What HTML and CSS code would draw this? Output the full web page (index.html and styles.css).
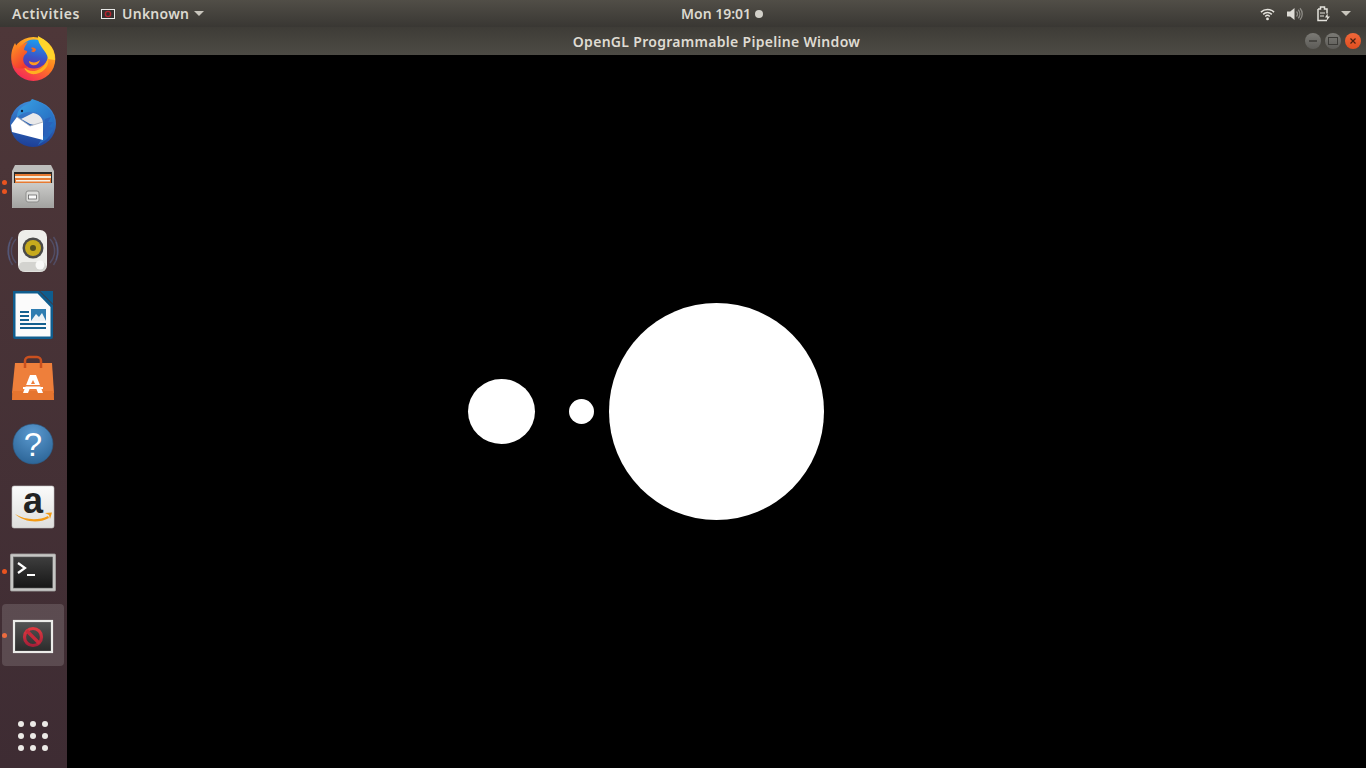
FILE: index.html
```html
<!DOCTYPE html>
<html lang="en">
<head>
<meta charset="utf-8">
<title>OpenGL Programmable Pipeline Window</title>
<link rel="stylesheet" href="styles.css">
</head>
<body>
<header class="topbar">
  <div class="top-left">
    <span class="activities">Activities</span>
    <span class="app-menu">
      <svg class="app-thumb" width="14" height="10" viewBox="0 0 14 10"><rect x=".5" y=".5" width="13" height="9" fill="#33302f" stroke="#e8e8e6"/><circle cx="7" cy="5" r="2.6" fill="none" stroke="#b5242e" stroke-width="1.4"/></svg>
      <span class="app-name">Unknown</span>
      <span class="caret"></span>
    </span>
  </div>
  <div class="clock"><span>Mon 19:01</span><i class="clock-dot"></i></div>
  <div class="tray">
    <svg width="15" height="14" viewBox="0 0 16 14"><g fill="none" stroke="#e4e2dc" stroke-width="1.600"><path d="M1 5a10 10 0 0 1 14 0"/><path d="M3.400 7.400a6.600 6.600 0 0 1 9.200 0"/><path d="M5.600 9.600a3.400 3.400 0 0 1 4.800 0"/></g><circle cx="8" cy="12.200" r="1.500" fill="#e4e2dc"/></svg>
    <svg width="16" height="14" viewBox="0 0 16 14"><path d="M0 4.500h3.200L7.500 1v12L3.200 9.500H0z" fill="#dedcd6"/><g fill="none" stroke="#8d8b85" stroke-width="1.300"><path d="M9.500 4.500a3.500 3.500 0 0 1 0 5"/><path d="M11.200 2.800a6 6 0 0 1 0 8.400"/><path d="M13 1.200a8.600 8.600 0 0 1 0 11.600"/></g></svg>
    <svg width="16" height="16" viewBox="0 0 16 16"><path d="M3 3h2.500V1h4v2H12v4.500M12 14.500H3V3" fill="none" stroke="#e4e2dc" stroke-width="1.500"/><path d="M5 7h5M5 10h4" stroke="#e4e2dc"/><path d="M12.500 7.500 10 11.500h2.200l-.8 3.500L15 10.500h-2.200z" fill="#e4e2dc"/></svg>
    <span class="caret tray-caret"></span>
  </div>
</header>

<div class="desktop">
  <nav class="dock">
    <div class="dock-item">
      <svg class="icon" viewBox="0 0 48 48">
        <defs>
          <linearGradient id="ffa" x1=".85" y1="0" x2=".25" y2="1"><stop offset="0" stop-color="#ffd52b"/><stop offset=".5" stop-color="#ff7d1f"/><stop offset="1" stop-color="#f3235c"/></linearGradient>
          <linearGradient id="ffb" x1=".6" y1="0" x2=".4" y2="1"><stop offset="0" stop-color="#1c9df0"/><stop offset=".6" stop-color="#3a55c8"/><stop offset="1" stop-color="#6a2aa6"/></linearGradient>
          <linearGradient id="ffc" x1="0" y1="0" x2=".6" y2="1"><stop offset="0" stop-color="#ff9c20"/><stop offset="1" stop-color="#f23a30"/></linearGradient>
        </defs>
        <circle cx="24.300" cy="24" r="22" fill="url(#ffa)"/>
        <circle cx="25" cy="19" r="14.500" fill="url(#ffb)"/>
        <path d="M29 1c8 4 17 11 17 24l-7-1c-1-9-11-13-10-23z" fill="#ffd52b"/>
        <path d="M39 22c2 8-3 15-12 17-7 1-11-3-12-7 4 5 11 5 16 2 5-3 7-8 8-12z" fill="#ffb020"/>
        <path d="M6 8l3 6c3-4 6-6 10-7-2 3-4 5-4 8l3 1c1 2-2 3-3 5-2 4 0 9 4 11-5 2-10 2-13 0C3 29 2 23 2.500 18c.5-4 2-7 3.500-10z" fill="url(#ffc)"/>
        <path d="M22 13c2-1 5 0 5 2-1 2-3 3-5 1l2-1z" fill="#f26a22"/>
        <path d="M20 26c3 2 8 2 11-1-1 4-4 6-8 5-2-1-3-2-3-4z" fill="#ff9a1f"/>
      </svg>
    </div>
    <div class="dock-item">
      <svg class="icon" viewBox="0 0 48 48">
        <defs>
          <linearGradient id="tb" x1=".6" y1="0" x2=".5" y2="1"><stop offset="0" stop-color="#3f8fdc"/><stop offset="1" stop-color="#1d3f97"/></linearGradient>
          <linearGradient id="tbh" x1="0" y1="0" x2="1" y2="1"><stop offset="0" stop-color="#3aa2e6"/><stop offset="1" stop-color="#1f5cb4"/></linearGradient>
        </defs>
        <circle cx="24" cy="25" r="23" fill="url(#tb)"/>
        <path d="M8 18c0-7 5-11 11-13l4-5c8 2 16 7 20 14 3 6 3 12 1 18l-6 8-9 6 5-8c2-4 3-8 3-12 0-6-5-12-11-13-7-1-12 0-18 5z" fill="url(#tbh)"/>
        <path d="M36 20l6-2-3 5 5 0-4 5 4 1-5 4 2 4-6 1z" fill="#2a63bb"/>
        <path d="M7 17l5 3 12-6c6 1 10 5 10 10v4L21 25z" fill="#e9e9ea"/>
        <path d="M2 26 8 18l13 9 13-4v18L3 33z" fill="#fff"/>
        <path d="M8 18l13 9 13-4" fill="none" stroke="#a9adb6" stroke-width=".8"/>
        <circle cx="13" cy="12" r="1.200" fill="#12243f"/>
      </svg>
    </div>
    <div class="dock-item">
      <svg class="icon" viewBox="0 0 48 48">
        <defs><linearGradient id="fm" x1="0" y1="0" x2="0" y2="1"><stop offset="0" stop-color="#cbcbc9"/><stop offset="1" stop-color="#a2a2a0"/></linearGradient></defs>
        <path d="M6 2h36l3 6v37H3V8z" fill="#bdbdbb"/>
        <rect x="5" y="9" width="38" height="12" fill="#2b2927"/>
        <rect x="6" y="11" width="36" height="9" fill="#e77a32"/>
        <rect x="6" y="13" width="36" height="2" fill="#f6ead8"/>
        <rect x="7" y="17" width="34" height="1.500" fill="#f4f0e8"/>
        <rect x="3" y="20" width="42" height="25" rx="1" fill="url(#fm)"/>
        <rect x="17" y="28" width="13" height="11" rx="2" fill="#dcdcda" stroke="#8d8d8b"/>
        <rect x="19.500" y="32" width="8" height="4" fill="#fafafa" stroke="#555" stroke-width=".7"/>
      </svg>
    </div>
    <div class="dock-item">
      <svg class="icon" viewBox="0 0 48 48">
        <g fill="none" stroke="#5a6a9a" stroke-opacity=".45" stroke-width="1.500"><path d="M7 12a18 18 0 0 0 0 24"/><path d="M3.500 10a24 24 0 0 0 0 28"/><path d="M1 15a30 30 0 0 0 0 18"/><path d="M41 12a18 18 0 0 1 0 24"/><path d="M44.500 10a24 24 0 0 1 0 28"/><path d="M47 15a30 30 0 0 1 0 18"/></g>
        <rect x="9" y="3" width="29" height="42" rx="7" fill="#eeeeea"/>
        <rect x="10" y="35" width="27" height="9.500" rx="4.500" fill="#d3d3cf"/>
        <circle cx="24" cy="21" r="10.500" fill="#4a4a48"/>
        <circle cx="24" cy="21" r="8" fill="#c6aa1d"/>
        <circle cx="24" cy="21" r="3" fill="#54501f"/>
        <circle cx="31" cy="38" r="4.500" fill="#f8f8f6"/>
      </svg>
    </div>
    <div class="dock-item">
      <svg class="icon" viewBox="0 0 48 48">
        <path d="M4 0h26l14 14v32a2 2 0 0 1-2 2H6a2 2 0 0 1-2-2z" fill="#0f5d8e"/>
        <path d="M6.500 2.500h22L41.500 16v29.500h-35z" fill="#fbfbfb"/>
        <path d="M31 0h13v13z" fill="#0f5d8e"/>
        <path d="M11 21h9M11 25h9M11 29h9M11 33h26M11 37h26" stroke="#14608f" stroke-width="1.800"/>
        <rect x="22" y="18" width="15" height="12" fill="#2f7db1"/>
        <path d="M22 30l5-7 3 3 3-4 4 8z" fill="#eef3f6"/>
      </svg>
    </div>
    <div class="dock-item">
      <svg class="icon" viewBox="0 0 48 48">
        <path d="M6 7h37l2 30H3z" fill="#ee7f3b"/>
        <path d="M3.200 35h41.600l.2 9H3z" fill="#e6752f"/>
        <path d="M16 12V5a4 4 0 0 1 4-4h8a4 4 0 0 1 4 4v7" fill="none" stroke="#c9501f" stroke-width="2.500"/>
        <path d="M21 19h6l7 18h-5l-2-5h-6l-2 5h-5z" fill="#fff"/>
        <path d="M24 24l-2 4h4z" fill="#ee7f3b"/>
        <rect x="15" y="29" width="18" height="1.500" fill="#ee7f3b"/>
        <rect x="14" y="31" width="20" height="2" fill="#fff"/>
      </svg>
    </div>
    <div class="dock-item">
      <svg class="icon" viewBox="0 0 48 48">
        <defs><radialGradient id="hp" cx=".5" cy=".25" r=".8"><stop offset="0" stop-color="#5b9ad0"/><stop offset="1" stop-color="#2a6294"/></radialGradient></defs>
        <circle cx="24" cy="24" r="20" fill="url(#hp)" stroke="#2c5a85" stroke-width=".6"/>
        <text class="help-mark" x="24" y="36" text-anchor="middle">?</text>
      </svg>
    </div>
    <div class="dock-item">
      <svg class="icon" viewBox="0 0 48 48">
        <defs><linearGradient id="az" x1="0" y1="0" x2="0" y2="1"><stop offset="0" stop-color="#fbfbfb"/><stop offset="1" stop-color="#dededc"/></linearGradient></defs>
        <rect x="3" y="2" width="42" height="42" rx="2" fill="url(#az)" stroke="#c4c4c2" stroke-width=".6"/>
        <text class="amazon-mark" x="24" y="29" text-anchor="middle">a</text>
        <path d="M6 30c10 6 23 7 33 2l1 2c-11 6-25 4-34-4z" fill="#f39a14"/>
        <path d="M36 29l7-.5-2 6.500-1-4z" fill="#f39a14"/>
      </svg>
    </div>
    <div class="dock-item running">
      <svg class="icon" viewBox="0 0 48 48">
        <defs><linearGradient id="tm" x1="0" y1="0" x2="0" y2="1"><stop offset="0" stop-color="#3e3e3e"/><stop offset="1" stop-color="#161616"/></linearGradient></defs>
        <rect x="1.500" y="6" width="45" height="37" rx="1" fill="#c6c6c4"/>
        <rect x="1.500" y="6" width="45" height="37" rx="1" fill="none" stroke="#a5a5a3" stroke-width=".8"/>
        <rect x="4.500" y="9" width="39" height="31" fill="url(#tm)" stroke="#5a5a5a" stroke-width=".6"/>
        <path d="M9 15l7 5-7 5" fill="none" stroke="#fff" stroke-width="2.200"/>
        <path d="M18 27h8" stroke="#fff" stroke-width="2"/>
      </svg>
    </div>
    <div class="dock-item running active">
      <svg class="icon" viewBox="0 0 48 48">
        <defs>
          <linearGradient id="tn" x1="0" y1="0" x2="0" y2="1"><stop offset="0" stop-color="#555"/><stop offset="1" stop-color="#2a2a2a"/></linearGradient>
          <linearGradient id="red" x1="0" y1="0" x2="0" y2="1"><stop offset="0" stop-color="#de3a40"/><stop offset="1" stop-color="#a81f38"/></linearGradient>
        </defs>
        <rect x="5" y="9" width="38" height="31" fill="url(#tn)" stroke="#ecece9" stroke-width="2.200"/>
        <circle cx="24" cy="25" r="8.500" fill="none" stroke="url(#red)" stroke-width="3.200"/>
        <path d="M17.500 18.500l13 13" stroke="#c52a3a" stroke-width="3.400"/>
      </svg>
    </div>
    <div class="dock-item apps">
      <div class="apps-grid"><i></i><i></i><i></i><i></i><i></i><i></i><i></i><i></i><i></i></div>
    </div>
  </nav>

  <main class="window">
    <div class="titlebar">
      <span class="title">OpenGL Programmable Pipeline Window</span>
      <div class="controls">
        <span class="ctl"><svg width="16" height="16" viewBox="0 0 16 16"><path d="M4 8h8" stroke="#3c3b37" stroke-width="1.500"/></svg></span>
        <span class="ctl"><svg width="16" height="16" viewBox="0 0 16 16"><rect x="3.500" y="4.500" width="9" height="7" fill="none" stroke="#3c3b37"/></svg></span>
        <span class="ctl close"><svg width="16" height="16" viewBox="0 0 16 16"><path d="M5.500 5.500l5 5M10.500 5.500l-5 5" stroke="#4a2010" stroke-width="1.200"/></svg></span>
      </div>
    </div>
    <div class="canvas">
      <div class="disc disc-mid"></div>
      <div class="disc disc-small"></div>
      <div class="disc disc-big"></div>
    </div>
  </main>
</div>
</body>
</html>
```

FILE: styles.css
```css
* { box-sizing: border-box; }

html, body {
  margin: 0;
  width: 1366px;
  height: 768px;
  overflow: hidden;
  background: #000;
  font-family: "Noto Sans", "Open Sans", sans-serif;
}

.topbar {
  height: 27px;
  display: flex;
  align-items: center;
  background: linear-gradient(#514e47, #393733);
  color: #dcd9d0;
  font-size: 14px;
  font-weight: 600;
}

.top-left {
  flex: 0 0 681px;
  display: flex;
  align-items: center;
  padding-left: 12px;
}

.activities { width: 89px; letter-spacing: .55px; }

.app-menu { display: flex; align-items: center; }
.app-thumb { margin-right: 7px; }
.app-name { letter-spacing: .25px; }

.caret {
  display: inline-block;
  width: 0;
  height: 0;
  border-left: 5px solid transparent;
  border-right: 5px solid transparent;
  border-top: 5px solid #c9c6bd;
  margin-left: 5px;
}

.clock { display: flex; align-items: center; gap: 4px; }
.clock-dot { width: 8px; height: 8px; border-radius: 50%; background: #d2d0c9; }

.tray {
  margin-left: auto;
  display: flex;
  align-items: center;
  gap: 12px;
  padding-right: 15px;
}
.tray-caret { margin-left: -2px; }

.desktop { display: flex; height: 741px; }

.dock {
  flex: 0 0 67px;
  display: flex;
  flex-direction: column;
  background: linear-gradient(#4e3739, #3e2c33);
}

.dock-item {
  position: relative;
  width: 66px;
  height: 64.1px;
  flex: none;
  display: flex;
  align-items: center;
  justify-content: center;
}

.icon { width: 48px; height: 48px; display: block; overflow: visible; }

.running::before {
  content: "";
  position: absolute;
  left: 2px;
  top: 29.500px;
  width: 5px;
  height: 5px;
  border-radius: 50%;
  background: #e95420;
}

.dock-item:nth-child(3)::before,
.dock-item:nth-child(3)::after {
  content: "";
  position: absolute;
  left: 2px;
  width: 5px;
  height: 5px;
  border-radius: 50%;
  background: #e95420;
}
.dock-item:nth-child(3)::before { top: 25px; }
.dock-item:nth-child(3)::after { top: 34px; }

.active::after {
  content: "";
  position: absolute;
  left: 2px;
  right: 2px;
  top: 0;
  bottom: 2px;
  border-radius: 4px;
  background: rgba(255, 255, 255, .14);
}
.active .icon { position: relative; z-index: 1; }

.apps { margin-top: auto; }

.apps-grid {
  display: grid;
  grid-template-columns: repeat(3, 6px);
  gap: 6px;
}
.apps-grid i { width: 6px; height: 6px; border-radius: 50%; background: #eceae6; }

.window { flex: 1; display: flex; flex-direction: column; }

.titlebar {
  height: 28px;
  position: relative;
  display: flex;
  align-items: center;
  justify-content: center;
  background: linear-gradient(#3e3c37, #4d4b45);
  color: #dfdbd2;
  font-size: 14px;
  font-weight: 600;
}

.title { letter-spacing: .3px; }

.controls {
  position: absolute;
  right: 5px;
  top: 6px;
  display: flex;
  gap: 4px;
}

.ctl {
  width: 16px;
  height: 16px;
  border-radius: 50%;
  background: linear-gradient(#7b7a75, #5c5b57);
  display: flex;
}
.close { background: linear-gradient(#f0683a, #e04e20); }

.canvas { flex: 1; position: relative; background: #000; }

.disc { position: absolute; background: #fff; border-radius: 50%; }
.disc-big { left: 542px; top: 248px; width: 215px; height: 217px; }
.disc-mid { left: 400.6px; top: 324px; width: 67px; height: 65px; }
.disc-small { left: 502px; top: 344px; width: 25px; height: 25px; }

.help-mark { font: 400 33px "Liberation Sans", sans-serif; fill: #fff; }
.amazon-mark { font: 700 36px "Liberation Sans", sans-serif; fill: #222; }
```
